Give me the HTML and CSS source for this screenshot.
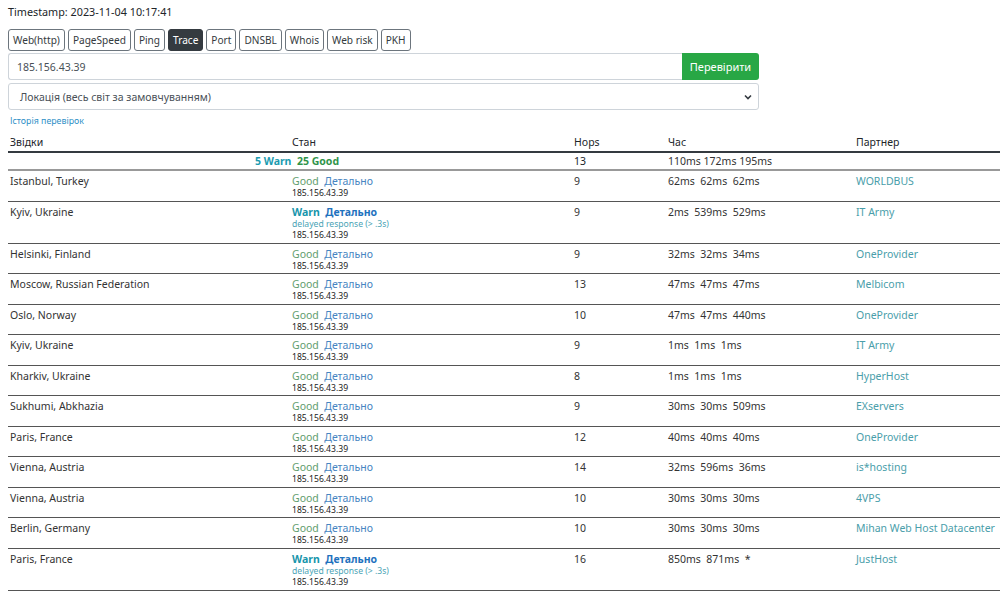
FILE: index.html
```html
<!DOCTYPE html>
<html lang="uk">
<head>
<meta charset="utf-8">
<title>Trace</title>
<link rel="stylesheet" href="styles.css">
</head>
<body>
<div class="page">
  <div class="timestamp">Timestamp: 2023-11-04 10:17:41</div>
  <div class="tabs">
    <span class="tab">Web(http)</span>
    <span class="tab">PageSpeed</span>
    <span class="tab">Ping</span>
    <span class="tab active">Trace</span>
    <span class="tab">Port</span>
    <span class="tab">DNSBL</span>
    <span class="tab">Whois</span>
    <span class="tab">Web risk</span>
    <span class="tab">PKH</span>
  </div>
  <div class="form">
    <div class="input-group">
      <div class="input">185.156.43.39</div>
      <div class="btn-check">Перевірити</div>
    </div>
    <div class="select">
      <span>Локація (весь світ за замовчуванням)</span>
      <svg class="chev" width="8" height="6" viewBox="0 0 8 6"><path d="M1 1.5 L4 4.5 L7 1.5" fill="none" stroke="#343a40" stroke-width="1.6"/></svg>
    </div>
    <div class="history"><a href="#">Історія перевірок</a></div>
  </div>

  <table class="results">
    <colgroup>
      <col class="c1"><col class="c2"><col class="c3"><col class="c4"><col class="c5">
    </colgroup>
    <thead>
      <tr><th>Звідки</th><th>Стан</th><th>Hops</th><th>Час</th><th>Партнер</th></tr>
    </thead>
    <tbody>
      <tr class="summary">
        <td colspan="2" class="sum-cell"><span class="warn-b">5 Warn</span>&nbsp; <span class="good-b">25 Good</span></td>
        <td>13</td>
        <td>110ms 172ms 195ms</td>
        <td></td>
      </tr>
      <tr>
        <td>Istanbul, Turkey</td>
        <td><div class="st"><span class="good">Good</span>&nbsp; <a class="det">Детально</a></div><div class="ip">185.156.43.39</div></td>
        <td>9</td><td class="pre">62ms  62ms  62ms</td><td><a class="partner">WORLDBUS</a></td>
      </tr>
      <tr>
        <td>Kyiv, Ukraine</td>
        <td><div class="st"><span class="warn">Warn</span>&nbsp; <a class="det bold">Детально</a></div><div class="delay">delayed response (&gt; .3s)</div><div class="ip">185.156.43.39</div></td>
        <td>9</td><td class="pre">2ms  539ms  529ms</td><td><a class="partner">IT Army</a></td>
      </tr>
      <tr>
        <td>Helsinki, Finland</td>
        <td><div class="st"><span class="good">Good</span>&nbsp; <a class="det">Детально</a></div><div class="ip">185.156.43.39</div></td>
        <td>9</td><td class="pre">32ms  32ms  34ms</td><td><a class="partner">OneProvider</a></td>
      </tr>
      <tr>
        <td>Moscow, Russian Federation</td>
        <td><div class="st"><span class="good">Good</span>&nbsp; <a class="det">Детально</a></div><div class="ip">185.156.43.39</div></td>
        <td>13</td><td class="pre">47ms  47ms  47ms</td><td><a class="partner">Melbicom</a></td>
      </tr>
      <tr>
        <td>Oslo, Norway</td>
        <td><div class="st"><span class="good">Good</span>&nbsp; <a class="det">Детально</a></div><div class="ip">185.156.43.39</div></td>
        <td>10</td><td class="pre">47ms  47ms  440ms</td><td><a class="partner">OneProvider</a></td>
      </tr>
      <tr>
        <td>Kyiv, Ukraine</td>
        <td><div class="st"><span class="good">Good</span>&nbsp; <a class="det">Детально</a></div><div class="ip">185.156.43.39</div></td>
        <td>9</td><td class="pre">1ms  1ms  1ms</td><td><a class="partner">IT Army</a></td>
      </tr>
      <tr>
        <td>Kharkiv, Ukraine</td>
        <td><div class="st"><span class="good">Good</span>&nbsp; <a class="det">Детально</a></div><div class="ip">185.156.43.39</div></td>
        <td>8</td><td class="pre">1ms  1ms  1ms</td><td><a class="partner">HyperHost</a></td>
      </tr>
      <tr>
        <td>Sukhumi, Abkhazia</td>
        <td><div class="st"><span class="good">Good</span>&nbsp; <a class="det">Детально</a></div><div class="ip">185.156.43.39</div></td>
        <td>9</td><td class="pre">30ms  30ms  509ms</td><td><a class="partner">EXservers</a></td>
      </tr>
      <tr>
        <td>Paris, France</td>
        <td><div class="st"><span class="good">Good</span>&nbsp; <a class="det">Детально</a></div><div class="ip">185.156.43.39</div></td>
        <td>12</td><td class="pre">40ms  40ms  40ms</td><td><a class="partner">OneProvider</a></td>
      </tr>
      <tr>
        <td>Vienna, Austria</td>
        <td><div class="st"><span class="good">Good</span>&nbsp; <a class="det">Детально</a></div><div class="ip">185.156.43.39</div></td>
        <td>14</td><td class="pre">32ms  596ms  36ms</td><td><a class="partner">is*hosting</a></td>
      </tr>
      <tr>
        <td>Vienna, Austria</td>
        <td><div class="st"><span class="good">Good</span>&nbsp; <a class="det">Детально</a></div><div class="ip">185.156.43.39</div></td>
        <td>10</td><td class="pre">30ms  30ms  30ms</td><td><a class="partner">4VPS</a></td>
      </tr>
      <tr>
        <td>Berlin, Germany</td>
        <td><div class="st"><span class="good">Good</span>&nbsp; <a class="det">Детально</a></div><div class="ip">185.156.43.39</div></td>
        <td>10</td><td class="pre">30ms  30ms  30ms</td><td class="nowrap"><a class="partner">Mihan Web Host Datacenter</a></td>
      </tr>
      <tr>
        <td>Paris, France</td>
        <td><div class="st"><span class="warn">Warn</span>&nbsp; <a class="det bold">Детально</a></div><div class="delay">delayed response (&gt; .3s)</div><div class="ip">185.156.43.39</div></td>
        <td>16</td><td class="pre">850ms  871ms  *</td><td><a class="partner">JustHost</a></td>
      </tr>
    </tbody>
  </table>
</div>
</body>
</html>
```

FILE: styles.css
```css
* { box-sizing: border-box; }
html, body { margin: 0; padding: 0; background: #fff; }
body {
  font-family: "Noto Sans", "Open Sans", "DejaVu Sans", sans-serif;
  font-size: 10.5px;
  color: #212529;
}
.page { padding: 4px 0 0 8px; width: 1000px; }
.timestamp { font-size: 10.8px; line-height: 16px; height: 24px; color: #212529; }

.tabs { display: flex; gap: 3px; height: 22px; margin-top: 1px; }
.tab {
  display: flex; align-items: center; justify-content: center;
  border: 1px solid #6c757d; border-radius: 3px;
  padding: 0 4px; font-size: 10.1px; color: #343a40; height: 22px;
}
.tab.active { background: #343a40; border-color: #343a40; color: #fff; }

.form { width: 751px; margin-top: 2px; }
.input-group { display: flex; height: 27px; }
.input {
  flex: 1; border: 1px solid #ced4da; border-right: none; border-radius: 3px 0 0 3px;
  padding: 0 8px; display: flex; align-items: center; font-size: 10.5px; color: #495057;
}
.btn-check {
  width: 77px; background: #28a745; color: #fff; border-radius: 0 3px 3px 0;
  display: flex; align-items: center; justify-content: center; font-size: 11px;
}
.select {
  margin-top: 3px; height: 27px; border: 1px solid #ced4da; border-radius: 3px;
  display: flex; align-items: center; justify-content: space-between;
  padding: 0 6px 0 11px; font-size: 10.5px; color: #495057;
}
.history { height: 22px; padding: 3px 0 0 2px; }
.history a { font-size: 8.8px; color: #2d8fc7; text-decoration: none; }

.results { border-collapse: collapse; width: 992px; table-layout: fixed; }
.c1 { width: 282px; } .c2 { width: 282px; } .c3 { width: 94px; } .c4 { width: 188px; } .c5 { width: 146px; }
.results th {
  text-align: left; font-weight: normal; padding: 3px 2px 2px; line-height: 14px;
  border-bottom: 2px solid #343a40; font-size: 10.5px;
}
.results td {
  vertical-align: top; padding: 4px 2px 1px; line-height: 13px;
  border-bottom: 1px solid #555; font-size: 10.5px;
}
.results td:nth-child(1), .results td:nth-child(3), .results td:nth-child(4) { color: #333; }
.summary td { border-bottom: 2px solid #999; padding: 2px 2px 0; height: 18px; }
.sum-cell { text-align: center; padding-left: 16px !important; }
.warn-b { color: #1a9bb0; font-weight: bold; }
.good-b { color: #2f9449; font-weight: bold; }
.pre { white-space: pre; }
.nowrap { white-space: nowrap; }
.st { line-height: 13px; }
.good { color: #5f9d6d; }
.warn { color: #1795ab; font-weight: bold; }
.det { color: #4785c2; }
.det.bold { color: #1f72be; font-weight: bold; }
.delay { font-size: 8.6px; line-height: 11.5px; color: #4aa3b5; }
.ip { font-size: 8.6px; line-height: 11.5px; color: #222; }
.partner { color: #4a9eaa; }
```
